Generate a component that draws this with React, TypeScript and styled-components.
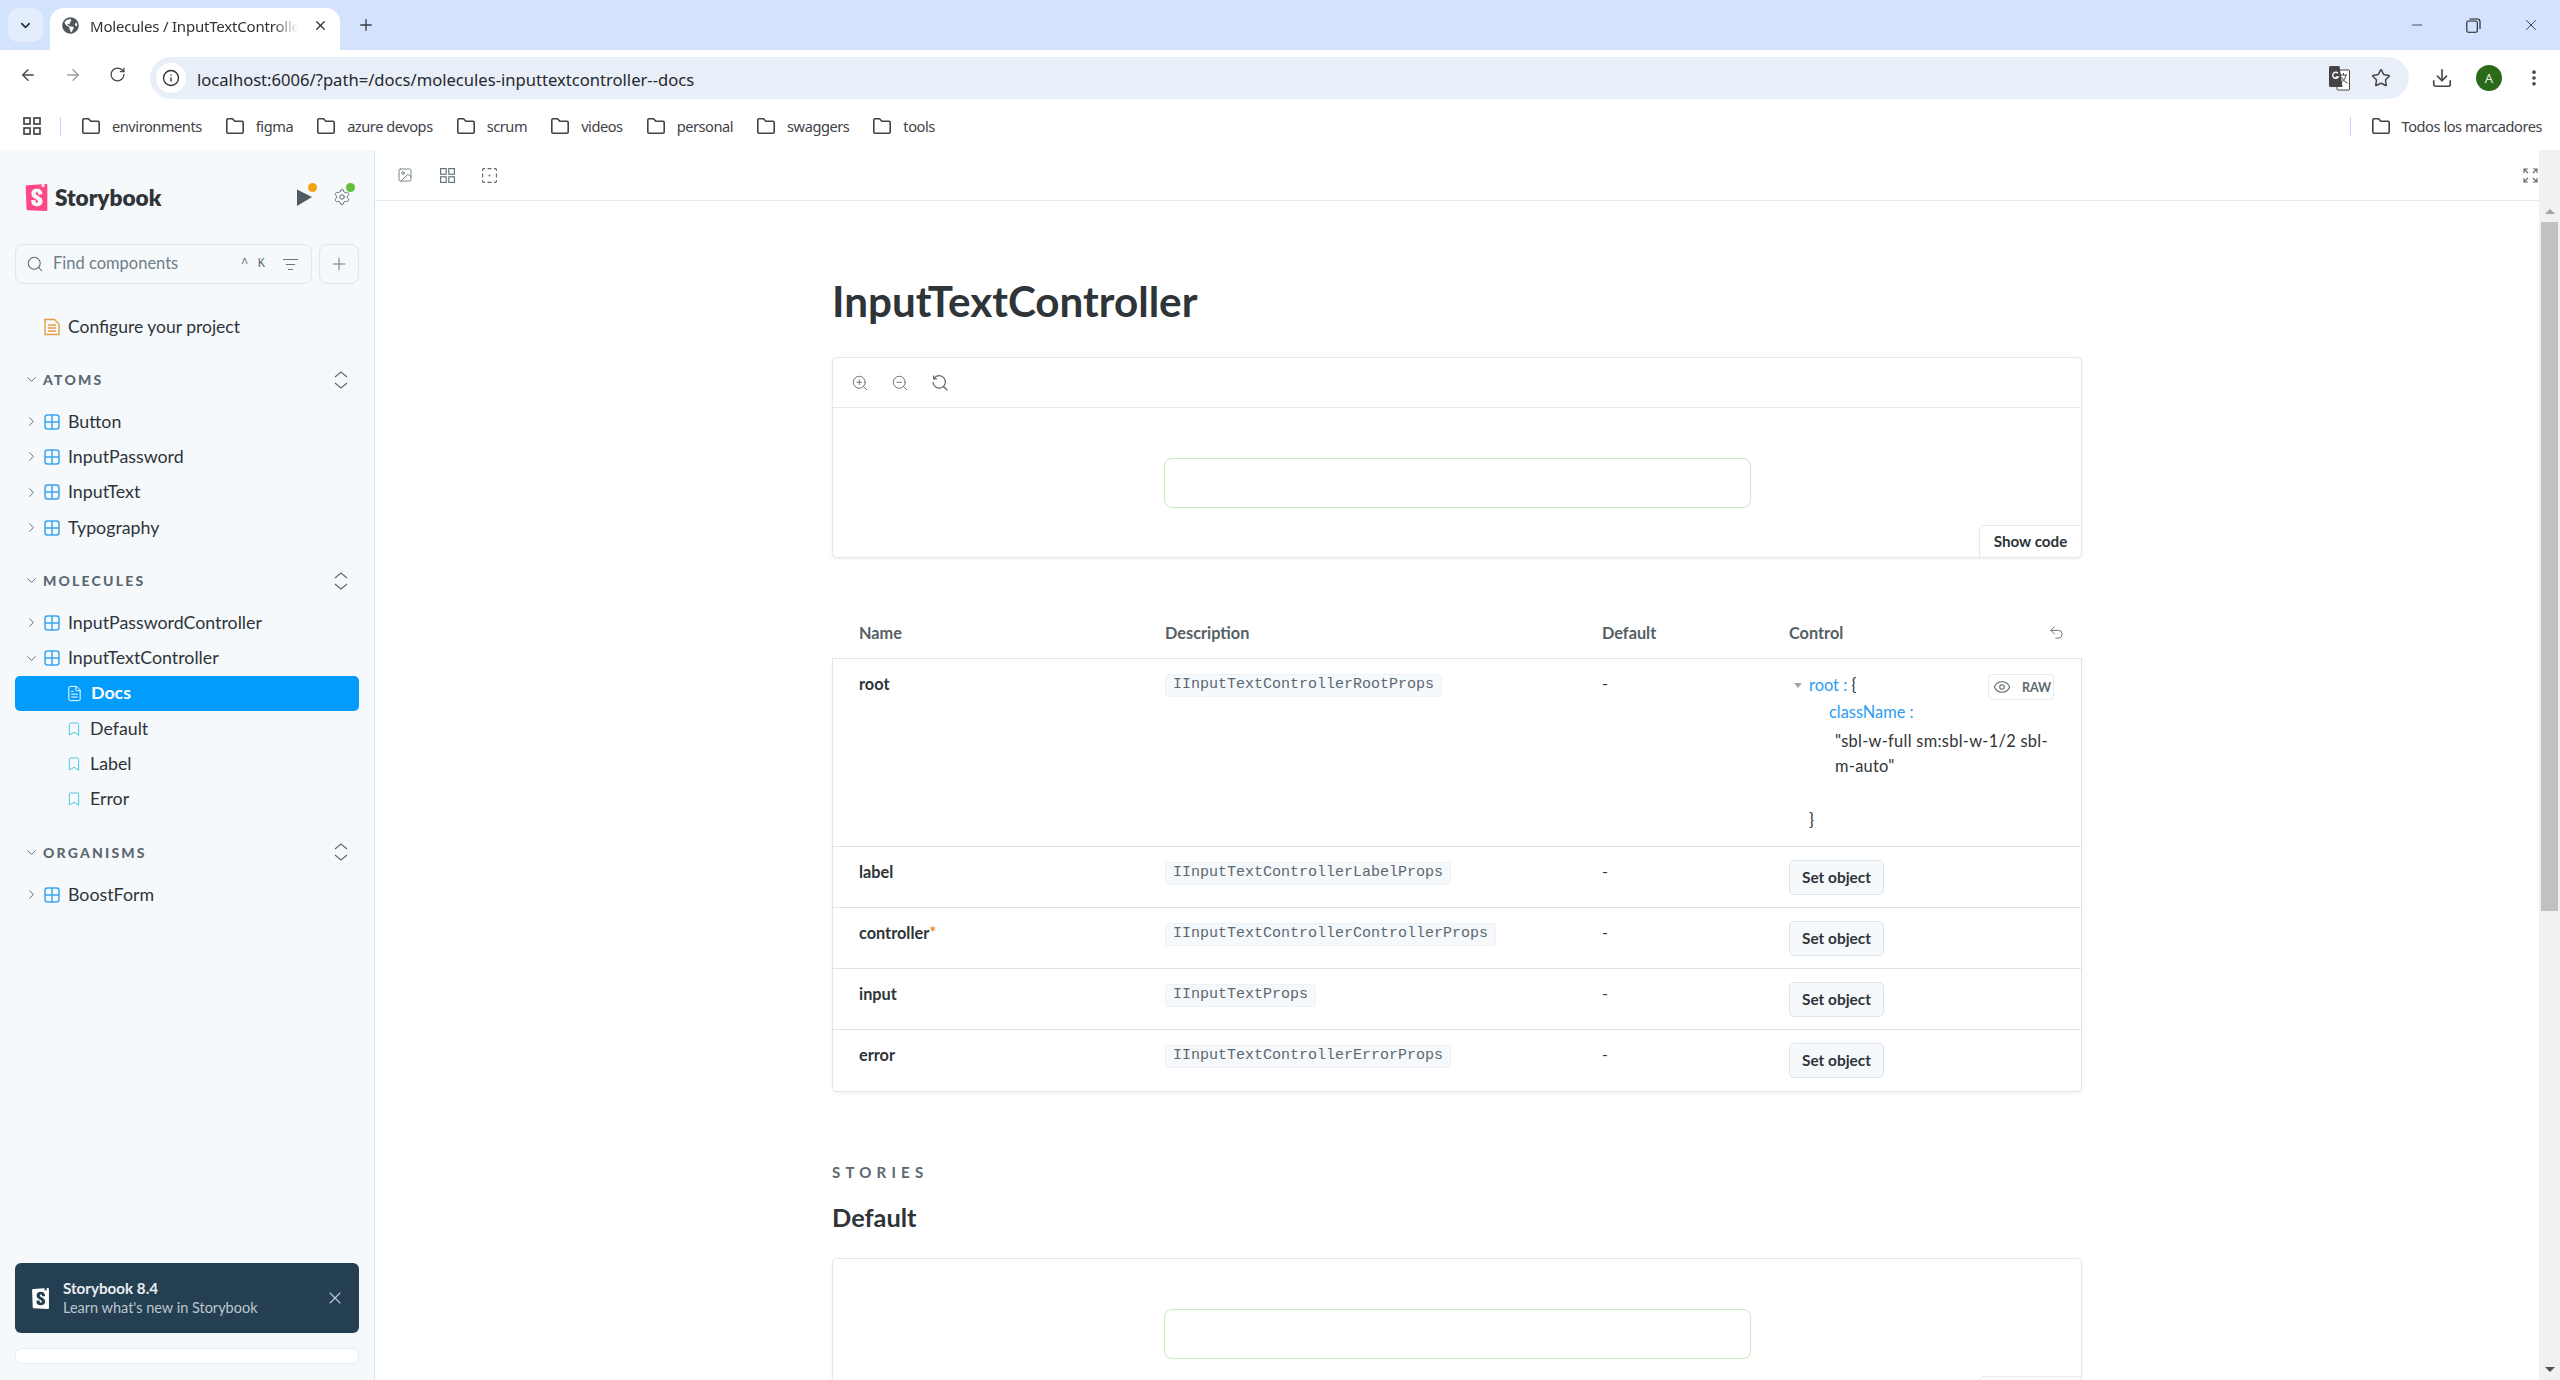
import React from "react";
import styled, { createGlobalStyle } from "styled-components";
import {
  ArrowLeft,
  ArrowRight,
  Bookmark,
  ChevronDown,
  ChevronRight,
  Download,
  EllipsisVertical,
  Eye,
  FileText,
  Image as ImageIcon,
  Info,
  ListFilter,
  Minus,
  Plus,
  RotateCw,
  Search,
  Settings,
  Star,
  Undo2,
  X,
  ZoomIn,
  ZoomOut,
} from "lucide-react";
import { FaGlobeAmericas } from "react-icons/fa";
import { SiStorybook } from "react-icons/si";

const CHROME_FONT = `"Noto Sans", "Open Sans", sans-serif`;
const SB_FONT = `"Lato", "Noto Sans", sans-serif`;
const MONO_FONT = `"Liberation Mono", monospace`;

const GlobalStyle = createGlobalStyle`
  html, body {
    margin: 0;
    padding: 0;
    background: #fff;
    overflow: hidden;
  }
  * { box-sizing: border-box; }
`;

const Page = styled.div`
  width: 2560px;
  height: 1380px;
  display: flex;
  flex-direction: column;
  overflow: hidden;
  font-family: ${SB_FONT};
  color: #2e3438;
`;

/* browser chrome */
const TabStrip = styled.div`
  height: 50px;
  flex: none;
  background: #d3e3fd;
  display: flex;
  align-items: flex-end;
  padding-left: 8px;
`;
const TabMenu = styled.div`
  width: 35px;
  height: 34px;
  margin-bottom: 8px;
  border-radius: 10px;
  background: #e4edfc;
  display: flex;
  align-items: center;
  justify-content: center;
  color: #1f2a3a;
`;
const Tab = styled.div`
  width: 290px;
  height: 42px;
  margin-left: 7px;
  background: #fff;
  border-radius: 14px 14px 0 0;
  display: flex;
  align-items: center;
  padding: 0 12px 7px;
  color: #44474a;
  font: 15px ${CHROME_FONT};
`;
const TabTitle = styled.span`
  margin-left: 11px;
  width: 208px;
  white-space: nowrap;
  overflow: hidden;
  letter-spacing: -0.2px;
  color: #2f3134;
  -webkit-mask-image: linear-gradient(90deg, #000 88%, transparent);
  mask-image: linear-gradient(90deg, #000 88%, transparent);
`;
const TabClose = styled.span`
  margin-left: 15px;
  display: flex;
  color: #2f3134;
`;
const NewTab = styled.span`
  margin: 0 0 8px 17px;
  height: 34px;
  display: flex;
  align-items: center;
  color: #3b3f44;
`;
const WindowControls = styled.div`
  margin-left: auto;
  height: 50px;
  display: flex;
  align-items: center;
  gap: 41px;
  padding-right: 20px;
  color: #1f1f1f;
`;

const AddressRow = styled.div`
  height: 50px;
  flex: none;
  display: flex;
  align-items: center;
  padding-left: 19px;
  color: #474747;
`;
const NavIcons = styled.div`
  width: 131px;
  display: flex;
  gap: 27px;
  flex: none;
`;
const Omnibox = styled.div`
  width: 2259px;
  height: 42px;
  margin-top: 6px;
  border-radius: 21px;
  background: #e9eff9;
  display: flex;
  align-items: center;
  padding-left: 6px;
`;
const SiteInfo = styled.span`
  width: 30px;
  height: 30px;
  border-radius: 50%;
  background: #fff;
  display: flex;
  align-items: center;
  justify-content: center;
  color: #2f3134;
`;
const UrlText = styled.span`
  margin-left: 11px;
  padding-top: 2px;
  font: 16.6px ${CHROME_FONT};
  color: #25282c;
`;
const OmniIcons = styled.div`
  margin-left: auto;
  display: flex;
  align-items: center;
  gap: 21px;
  padding-right: 18px;
`;
const AddressActions = styled.div`
  margin-top: 6px;
  margin-left: 22px;
  display: flex;
  align-items: center;
`;
const Avatar = styled.span`
  width: 26px;
  height: 26px;
  margin: 0 22px 0 23px;
  border-radius: 50%;
  background: #2b6a1b;
  color: #e6f0e0;
  font: 13px ${CHROME_FONT};
  display: flex;
  align-items: center;
  justify-content: center;
`;

const BookmarksRow = styled.div`
  height: 50px;
  flex: none;
  display: flex;
  align-items: center;
  padding: 2px 18px 0 23px;
  font: 14.6px ${CHROME_FONT};
  letter-spacing: -0.45px;
  color: #3f4246;
`;
const BookmarkDivider = styled.span`
  width: 1px;
  height: 19px;
  background: #c4d6f5;
  margin: 0 20px 0 19px;
`;
const BookmarkItem = styled.span<{ $last?: boolean }>`
  display: flex;
  align-items: center;
  gap: 11px;
  margin-right: ${(p) => (p.$last ? 0 : 23)}px;
  color: #3f4246;
`;
const BookmarksEnd = styled.div`
  margin-left: auto;
  display: flex;
  align-items: center;
`;

/* app */
const Body = styled.div`
  flex: 1;
  min-height: 0;
  display: flex;
`;
const Sidebar = styled.aside`
  width: 375px;
  flex: none;
  background: #f6f9fc;
  border-right: 1px solid #d9e3ec;
  padding: 27px 15px 16px;
  display: flex;
  flex-direction: column;
`;
const BrandRow = styled.div`
  height: 40px;
  display: flex;
  align-items: center;
  padding-left: 8px;
  color: #ff4785;
`;
const BrandName = styled.span`
  margin-left: 5px;
  font: 800 22.6px ${SB_FONT};
  color: #2e3438;
`;
const BrandTools = styled.div`
  margin-left: auto;
  padding-right: 8px;
  display: flex;
  align-items: center;
  gap: 20px;
  color: #5c6870;
`;
const ToolDot = styled.span<{ $color: string }>`
  position: relative;
  display: flex;
  &::after {
    content: "";
    position: absolute;
    right: -4px;
    top: -5px;
    width: 9px;
    height: 9px;
    border-radius: 50%;
    background: ${(p) => p.$color};
  }
`;
const SearchRow = styled.div`
  display: flex;
  gap: 7px;
  margin-top: 27px;
`;
const SearchBox = styled.div`
  flex: 1;
  height: 40px;
  border: 1px solid #dde7f0;
  border-radius: 8px;
  display: flex;
  align-items: center;
  padding: 0 12px 0 10px;
  color: #5c6870;
`;
const SearchText = styled.span`
  margin-left: 9px;
  margin-top: -2px;
  font-size: 16.5px;
  color: #6f7d87;
`;
const Shortcut = styled.span`
  margin-left: auto;
  width: 24px;
  margin-right: 17px;
  display: flex;
  justify-content: space-between;
  font: 12px ${MONO_FONT};
  color: #5c6870;
`;
const AddButton = styled.div`
  width: 40px;
  height: 40px;
  border: 1px solid #dde7f0;
  border-radius: 8px;
  display: flex;
  align-items: center;
  justify-content: center;
  color: #6f7d87;
`;
const TopLink = styled.div`
  margin-top: 25px;
  height: 35px;
  display: flex;
  align-items: center;
  gap: 8px;
  padding-left: 29px;
  font-size: 17.5px;
  color: #2e3438;
`;
const SectionHead = styled.div`
  height: 35px;
  margin: 18px 0 7px;
  display: flex;
  align-items: center;
  padding: 0 11px 0 9px;
  font-size: 14px;
  font-weight: 900;
  letter-spacing: 2.2px;
  color: #5c6870;
`;
const SectionLabel = styled.span`
  margin-left: 4px;
`;
const ExpandAll = styled.span`
  margin-left: auto;
  margin-right: 0;
  display: flex;
`;
const TreeRow = styled.div<{ $active?: boolean; $leaf?: boolean }>`
  height: 35.3px;
  display: flex;
  align-items: center;
  padding-left: ${(p) => (p.$leaf ? "51px" : "9px")};
  border-radius: 5px;
  font-size: 17.8px;
  font-weight: ${(p) => (p.$active ? 700 : 400)};
  color: ${(p) => (p.$active ? "#fff" : "#2e3438")};
  background: ${(p) => (p.$active ? "#029cfd" : "transparent")};
`;
const TreeChevron = styled.span`
  width: 20px;
  display: flex;
  color: #5c6870;
`;
const TreeLabel = styled.span`
  margin-left: 8px;
  margin-top: -2px;
`;
const Spacer = styled.div`
  flex: 1;
`;
const Notice = styled.div`
  height: 70px;
  background: #243f52;
  border-radius: 6px;
  display: flex;
  align-items: center;
  padding: 0 14px 0 15px;
  color: #fff;
`;
const NoticeText = styled.div`
  margin-left: 12px;
  flex: 1;
`;
const NoticeTitle = styled.div`
  font-size: 15.2px;
  font-weight: 700;
  line-height: 20px;
  color: #e8edf1;
`;
const NoticeSub = styled.div`
  font-size: 14.5px;
  line-height: 20px;
  color: #bcc6ce;
`;
const NoticeClose = styled.span`
  display: flex;
  color: #c2ccd3;
`;
const FooterBar = styled.div`
  height: 16px;
  margin-top: 15px;
  background: #fff;
  border: 1px solid #e6ecf2;
  border-radius: 6px;
`;

const Main = styled.main`
  flex: 1;
  min-width: 0;
  display: flex;
  flex-direction: column;
`;
const PreviewToolbar = styled.div`
  height: 51px;
  flex: none;
  border-bottom: 1px solid #e4e9ee;
  display: flex;
  align-items: center;
  padding: 0 22px;
  gap: 27px;
  color: #5c6870;
`;
const ToolbarEnd = styled.span`
  margin-left: auto;
  display: flex;
`;
const DocBody = styled.div`
  flex: 1;
  min-height: 0;
  display: flex;
  margin-top: -51px;
`;
const Doc = styled.div`
  flex: 1;
  overflow: hidden;
  display: flex;
  flex-direction: column;
  align-items: center;
  margin-top: 51px;
`;
const DocColumn = styled.div`
  width: 1250px;
  padding-top: 71px;
`;
const Title = styled.h1`
  margin: 0;
  height: 58px;
  line-height: 58px;
  font-size: 42.2px;
  font-weight: 700;
  color: #2e3438;
`;
const PreviewBlock = styled.section`
  position: relative;
  margin-top: 27px;
  border: 1px solid #e3e9ef;
  border-radius: 5px;
  background: #fff;
  box-shadow: 0 1px 3px rgba(0, 0, 0, 0.08);
`;
const ZoomBar = styled.div`
  height: 50px;
  border-bottom: 1px solid #e3e9ef;
  display: flex;
  align-items: center;
  gap: 22px;
  padding: 1px 0 0 18px;
  color: #5c6870;
`;
const Canvas = styled.div`
  height: 149px;
  display: flex;
  align-items: center;
  justify-content: center;
`;
const FakeInput = styled.div`
  width: 587px;
  height: 50px;
  border: 1px solid #c4ecbc;
  border-radius: 8px;
  background: #fff;
`;
const ShowCode = styled.div`
  position: absolute;
  right: -1px;
  bottom: -1px;
  width: 103px;
  height: 33px;
  padding-bottom: 2px;
  border: 1px solid #e3e9ef;
  border-radius: 5px 0 5px 0;
  background: #fff;
  display: flex;
  align-items: center;
  justify-content: center;
  font-size: 15.2px;
  font-weight: 700;
  color: #2e3438;
`;

const TableHead = styled.div`
  margin-top: 48px;
  height: 52px;
  display: grid;
  grid-template-columns: 306px 437px 187px 1fr 34px;
  align-items: center;
  padding-left: 27px;
  font-size: 16.3px;
  font-weight: 700;
  color: #555f66;
`;
const TableBox = styled.div`
  border: 1px solid #dfe5ea;
  box-shadow: 0 2px 5px rgba(0, 0, 0, 0.05);
  border-radius: 0 0 5px 5px;
`;
const TableRow = styled.div<{ $tall?: boolean }>`
  position: relative;
  height: ${(p) => (p.$tall ? "188px" : "61px")};
  display: grid;
  grid-template-columns: 306px 437px 187px 1fr;
  align-items: start;
  padding-left: 26px;
  padding-top: 13px;
  border-bottom: 1px solid #dfe3e6;
  &:last-child {
    border-bottom: 0;
  }
`;
const PropName = styled.div`
  padding-top: 1px;
  line-height: 22px;
  font-size: 16.3px;
  font-weight: 700;
  color: #2e3438;
`;
const Required = styled.span`
  color: #e4902f;
`;
const TypeChip = styled.code`
  display: inline-block;
  height: 23px;
  padding: 0 7px;
  background: #f6f9fc;
  border: 1px solid #eef2f6;
  border-radius: 3px;
  font: 15px/19px ${MONO_FONT};
  color: #5c6870;
`;
const Dash = styled.div`
  padding-top: 0;
  line-height: 22px;
  font-size: 16px;
`;
const SetButton = styled.div`
  width: 95px;
  height: 35px;
  padding-bottom: 1px;
  background: #f6f9fc;
  border: 1px solid #dde5ec;
  border-radius: 5px;
  display: flex;
  align-items: center;
  justify-content: center;
  font-size: 15.4px;
  font-weight: 700;
  color: #2e3438;
`;
const JsonTree = styled.div`
  margin-top: -1px;
  font-size: 16.4px;
  color: #2e3438;
`;
const JsonLine = styled.div<{ $indent: number; $height: number }>`
  padding-left: ${(p) => p.$indent}px;
  height: ${(p) => p.$height}px;
  line-height: 27px;
  display: flex;
  position: relative;
`;
const Key = styled.span`
  color: #2a9df4;
`;
const Caret = styled.span`
  position: absolute;
  left: 5px;
  top: 12px;
  border: 4px solid transparent;
  border-top: 5px solid #9aa5ad;
  border-bottom: 0;
`;
const JsonValue = styled.div`
  width: 222px;
  margin-left: 46px;
  height: 81px;
  padding-top: 3px;
  line-height: 25px;
  letter-spacing: 0.28px;
`;
const RawButton = styled.div`
  position: absolute;
  right: 27px;
  top: 15px;
  width: 66px;
  height: 26px;
  border: 1px solid #e6ebf0;
  border-radius: 4px;
  display: flex;
  align-items: center;
  gap: 11px;
  padding-left: 4px;
  font-size: 12.5px;
  font-weight: 700;
  color: #5c6870;
`;

const Eyebrow = styled.div`
  margin-top: 69px;
  height: 22px;
  line-height: 22px;
  font-size: 15px;
  font-weight: 700;
  letter-spacing: 5.2px;
  color: #5c6870;
`;
const StoryName = styled.h2`
  margin: 16px 0 0;
  height: 36px;
  line-height: 36px;
  font-size: 25.4px;
  font-weight: 700;
  color: #2e3438;
`;
const StoryBlock = styled(PreviewBlock)`
  margin-top: 23px;
`;

const ScrollTrack = styled.div`
  width: 21px;
  flex: none;
  background: #f1f1f1;
  display: flex;
  flex-direction: column;
  align-items: center;
`;
const ScrollArrow = styled.span<{ $down?: boolean }>`
  width: 0;
  height: 0;
  margin: ${(p) => (p.$down ? "auto 0 8px" : "59px 0 0")};
  border-left: 5px solid transparent;
  border-right: 5px solid transparent;
  ${(p) => (p.$down ? "border-top: 5px solid #505050;" : "border-bottom: 5px solid #a3a3a3;")}
`;
const ScrollThumb = styled.div`
  width: 17px;
  height: 689px;
  margin-top: 8px;
  background: #c1c1c1;
`;

/* small drawings */
const FolderIcon = () => (
  <svg width="20" height="18" viewBox="0 0 20 18" fill="none" stroke="#3f4246" strokeWidth="1.6">
    <path d="M1.8 3a1.2 1.2 0 0 1 1.2-1.2h4.6l2.2 2.4H17a1.2 1.2 0 0 1 1.2 1.2V15a1.2 1.2 0 0 1-1.2 1.2H3A1.2 1.2 0 0 1 1.8 15Z" />
  </svg>
);
const AppsIcon = () => (
  <svg width="18" height="18" viewBox="0 0 18 18" fill="none" stroke="#44474a" strokeWidth="1.7">
    <rect x="1" y="1" width="6" height="6" />
    <rect x="11" y="1" width="6" height="6" />
    <rect x="1" y="11" width="6" height="6" />
    <rect x="11" y="11" width="6" height="6" />
  </svg>
);
const RestoreIcon = () => (
  <svg width="15" height="15" viewBox="0 0 15 15" fill="none" stroke="#1f1f1f" strokeWidth="1.1">
    <rect x="0.8" y="3" width="10.5" height="11.2" rx="1.5" />
    <path d="M3.5 1h8a2.5 2.5 0 0 1 2.5 2.5V11" />
  </svg>
);
const TranslateIcon = () => (
  <svg width="21" height="26" viewBox="0 0 21 26" fill="none">
    <rect x="8" y="5" width="12.5" height="20" rx="1" fill="#fff" stroke="#444" strokeWidth="1" />
    <path d="M11 10h7M14.5 8v2M17 10c-.8 4-3 6.5-5.5 8M12.5 12c1 2.5 3.5 5 6 6" stroke="#444" strokeWidth="1" />
    <path d="M1.5 1h9l3 21-5-0H1.5A1.5 1.5 0 0 1 0 20.5v-18A1.5 1.5 0 0 1 1.5 1Z" fill="#444" />
    <path d="M9 8.3A3 3 0 1 0 9.2 12H6.6" stroke="#fff" strokeWidth="1.4" />
  </svg>
);
const ComponentIcon = () => (
  <svg width="16" height="16" viewBox="0 0 16 16" fill="none" stroke="#3ca5ee" strokeWidth="1.5">
    <rect x="1" y="1" width="14" height="14" rx="2.5" />
    <path d="M8 1v14M1 8h14" />
  </svg>
);
const GridIcon = () => (
  <svg width="15" height="15" viewBox="0 0 15 15" fill="none" stroke="currentColor" strokeWidth="1.1">
    <rect x="0.6" y="0.6" width="5.6" height="5.6" />
    <rect x="8.8" y="0.6" width="5.6" height="5.6" />
    <rect x="0.6" y="8.8" width="5.6" height="5.6" />
    <rect x="8.8" y="8.8" width="5.6" height="5.6" />
  </svg>
);
const FrameIcon = () => (
  <svg width="15" height="15" viewBox="0 0 15 15" fill="none" stroke="currentColor" strokeWidth="1.1">
    <path d="M.6 3V1.5a.9.9 0 0 1 .9-.9H3M5.5.6h4M12 .6h1.5a.9.9 0 0 1 .9.9V3M14.4 5.5v4M14.4 12v1.5a.9.9 0 0 1-.9.9H12M9.5 14.4h-4M3 14.4H1.5a.9.9 0 0 1-.9-.9V12M.6 9.5v-4" />
    <circle cx="7.5" cy="7.5" r="0.9" fill="currentColor" stroke="none" />
  </svg>
);
const FullscreenIcon = () => (
  <svg width="15" height="15" viewBox="0 0 15 15" fill="none" stroke="currentColor" strokeWidth="1.1">
    <path d="M1 5V1h4M1 1l4 4M10 1h4v4M14 1l-4 4M1 10v4h4M1 14l4-4M14 10v4h-4M14 14l-4-4" />
  </svg>
);
const ZoomResetIcon = () => (
  <svg width="18" height="18" viewBox="0 0 18 18" fill="none" stroke="currentColor" strokeWidth="1.2">
    <path d="M3 4.5A6.2 6.2 0 1 1 2 8M2.6 1.6v3.2h3.2M12 12l4.5 4.5" />
  </svg>
);
const PlayIcon = () => (
  <svg width="17" height="19" viewBox="0 0 17 19" fill="#4f5b63">
    <path d="M1 1.5 16 9 1 18Z" />
  </svg>
);
const OrangeDocIcon = () => (
  <svg width="16" height="18" viewBox="0 0 16 18" fill="none" stroke="#e69d45" strokeWidth="1.4">
    <path d="M1 1.5h9.5L15 6v10.5H1Z" />
    <path d="M4 7h8M4 10h8M4 13h8" />
  </svg>
);
const ExpandIcon = () => (
  <svg width="14" height="20" viewBox="0 0 14 20" fill="none" stroke="#5c6870" strokeWidth="1.1">
    <path d="M1 7l6-5 6 5M1 13l6 5 6-5" />
  </svg>
);

const bookmarks = ["environments", "figma", "azure devops", "scrum", "videos", "personal", "swaggers", "tools"];

const rows = [
  { name: "label", type: "IInputTextControllerLabelProps" },
  { name: "controller", type: "IInputTextControllerControllerProps", required: true },
  { name: "input", type: "IInputTextProps" },
  { name: "error", type: "IInputTextControllerErrorProps" },
];

const Component = ({ name, open }: { name: string; open?: boolean }) => (
  <TreeRow>
    <TreeChevron>
      {open ? <ChevronDown size={15} strokeWidth={1.5} /> : <ChevronRight size={15} strokeWidth={1.5} />}
    </TreeChevron>
    <ComponentIcon />
    <TreeLabel>{name}</TreeLabel>
  </TreeRow>
);

const Section = ({ name }: { name: string }) => (
  <SectionHead>
    <ChevronDown size={15} strokeWidth={1.5} />
    <SectionLabel>{name}</SectionLabel>
    <ExpandAll>
      <ExpandIcon />
    </ExpandAll>
  </SectionHead>
);

const Story = ({ name }: { name: string }) => (
  <TreeRow $leaf>
    <Bookmark size={16} strokeWidth={1.5} color="#4fc9dd" />
    <TreeLabel>{name}</TreeLabel>
  </TreeRow>
);

export default function App() {
  return (
    <Page>
      <GlobalStyle />
      <TabStrip>
        <TabMenu>
          <ChevronDown size={15} strokeWidth={2.5} />
        </TabMenu>
        <Tab>
          <FaGlobeAmericas size={17} color="#50555a" />
          <TabTitle>Molecules / InputTextController</TabTitle>
          <TabClose>
            <X size={15} strokeWidth={2} />
          </TabClose>
        </Tab>
        <NewTab>
          <Plus size={18} strokeWidth={1.8} />
        </NewTab>
        <WindowControls>
          <Minus size={16} strokeWidth={1.1} />
          <RestoreIcon />
          <X size={18} strokeWidth={1.1} />
        </WindowControls>
      </TabStrip>

      <AddressRow>
        <NavIcons>
          <ArrowLeft size={18} strokeWidth={1.8} />
          <ArrowRight size={18} strokeWidth={1.8} color="#9a9da1" />
          <RotateCw size={17} strokeWidth={1.8} />
        </NavIcons>
        <Omnibox>
          <SiteInfo>
            <Info size={18} strokeWidth={1.8} />
          </SiteInfo>
          <UrlText>localhost:6006/?path=/docs/molecules-inputtextcontroller--docs</UrlText>
          <OmniIcons>
            <TranslateIcon />
            <Star size={20} strokeWidth={1.8} />
          </OmniIcons>
        </Omnibox>
        <AddressActions>
          <Download size={22} strokeWidth={1.8} />
          <Avatar>A</Avatar>
          <EllipsisVertical size={20} strokeWidth={2.4} />
        </AddressActions>
      </AddressRow>

      <BookmarksRow>
        <AppsIcon />
        <BookmarkDivider />
        {bookmarks.map((b) => (
          <BookmarkItem key={b}>
            <FolderIcon />
            {b}
          </BookmarkItem>
        ))}
        <BookmarksEnd>
          <BookmarkDivider />
          <BookmarkItem $last>
            <FolderIcon />
            Todos los marcadores
          </BookmarkItem>
        </BookmarksEnd>
      </BookmarksRow>

      <Body>
        <Sidebar>
          <BrandRow>
            <SiStorybook size={27} />
            <BrandName>Storybook</BrandName>
            <BrandTools>
              <ToolDot $color="#f5a21b">
                <PlayIcon />
              </ToolDot>
              <ToolDot $color="#66bf3c">
                <Settings size={18} strokeWidth={1.3} />
              </ToolDot>
            </BrandTools>
          </BrandRow>
          <SearchRow>
            <SearchBox>
              <Search size={18} strokeWidth={1.4} />
              <SearchText>Find components</SearchText>
              <Shortcut>
                <span>^</span>
                <span>K</span>
              </Shortcut>
              <ListFilter size={17} strokeWidth={1.3} />
            </SearchBox>
            <AddButton>
              <Plus size={20} strokeWidth={1.2} />
            </AddButton>
          </SearchRow>
          <TopLink>
            <OrangeDocIcon />
            Configure your project
          </TopLink>

          <Section name="ATOMS" />
          <Component name="Button" />
          <Component name="InputPassword" />
          <Component name="InputText" />
          <Component name="Typography" />

          <Section name="MOLECULES" />
          <Component name="InputPasswordController" />
          <Component name="InputTextController" open />
          <TreeRow $leaf $active>
            <FileText size={17} strokeWidth={1.4} />
            <TreeLabel>Docs</TreeLabel>
          </TreeRow>
          <Story name="Default" />
          <Story name="Label" />
          <Story name="Error" />

          <Section name="ORGANISMS" />
          <Component name="BoostForm" />

          <Spacer />
          <Notice>
            <SiStorybook size={21} />
            <NoticeText>
              <NoticeTitle>Storybook 8.4</NoticeTitle>
              <NoticeSub>Learn what's new in Storybook</NoticeSub>
            </NoticeText>
            <NoticeClose>
              <X size={20} strokeWidth={1.3} />
            </NoticeClose>
          </Notice>
          <FooterBar />
        </Sidebar>

        <Main>
          <PreviewToolbar>
            <ImageIcon size={16} strokeWidth={1.2} />
            <GridIcon />
            <FrameIcon />
            <ToolbarEnd>
              <FullscreenIcon />
            </ToolbarEnd>
          </PreviewToolbar>
          <DocBody>
            <Doc>
              <DocColumn>
                <Title>InputTextController</Title>
                <PreviewBlock>
                  <ZoomBar>
                    <ZoomIn size={18} strokeWidth={1.2} />
                    <ZoomOut size={18} strokeWidth={1.2} />
                    <ZoomResetIcon />
                  </ZoomBar>
                  <Canvas>
                    <FakeInput />
                  </Canvas>
                  <ShowCode>Show code</ShowCode>
                </PreviewBlock>

                <TableHead>
                  <span>Name</span>
                  <span>Description</span>
                  <span>Default</span>
                  <span>Control</span>
                  <Undo2 size={17} strokeWidth={1.2} />
                </TableHead>
                <TableBox>
                  <TableRow $tall>
                    <PropName>root</PropName>
                    <div>
                      <TypeChip>IInputTextControllerRootProps</TypeChip>
                    </div>
                    <Dash>-</Dash>
                    <JsonTree>
                      <JsonLine $indent={20} $height={27}>
                        <Caret />
                        <Key>root :&nbsp;</Key>
                        {"{"}
                      </JsonLine>
                      <JsonLine $indent={40} $height={27}>
                        <Key>className :</Key>
                      </JsonLine>
                      <JsonValue>"sbl-w-full sm:sbl-w-1/2 sbl-m-auto"</JsonValue>
                      <JsonLine $indent={20} $height={27}>
                        {"}"}
                      </JsonLine>
                    </JsonTree>
                    <RawButton>
                      <Eye size={18} strokeWidth={1.4} />
                      RAW
                    </RawButton>
                  </TableRow>
                  {rows.map((r) => (
                    <TableRow key={r.name}>
                      <PropName>
                        {r.name}
                        {r.required && <Required>*</Required>}
                      </PropName>
                      <div>
                        <TypeChip>{r.type}</TypeChip>
                      </div>
                      <Dash>-</Dash>
                      <SetButton>Set object</SetButton>
                    </TableRow>
                  ))}
                </TableBox>

                <Eyebrow>STORIES</Eyebrow>
                <StoryName>Default</StoryName>
                <StoryBlock>
                  <Canvas>
                    <FakeInput />
                  </Canvas>
                  <ShowCode>Show code</ShowCode>
                </StoryBlock>
              </DocColumn>
            </Doc>
            <ScrollTrack>
              <ScrollArrow />
              <ScrollThumb />
              <ScrollArrow $down />
            </ScrollTrack>
          </DocBody>
        </Main>
      </Body>
    </Page>
  );
}
